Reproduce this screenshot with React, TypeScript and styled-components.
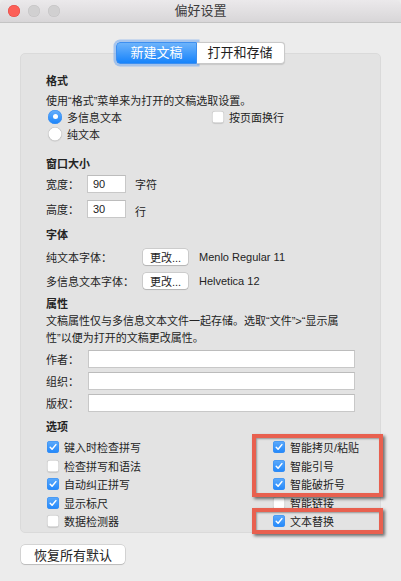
import React from 'react';
import styled, { createGlobalStyle } from 'styled-components';

const GlobalStyle = createGlobalStyle`
  html, body { margin: 0; padding: 0; background: #ececec; }
  body {
    font-family: "Liberation Sans", "Noto Sans CJK SC", sans-serif;
    color: #242424;
    -webkit-font-smoothing: antialiased;
  }
  * { box-sizing: border-box; }
`;

const Window = styled.div`
  width: 401px;
  height: 581px;
  background: #ececec;
  display: flex;
  flex-direction: column;
  border-radius: 5px;
  overflow: hidden;
`;

const TitleBar = styled.div`
  height: 23px;
  flex: none;
  display: grid;
  grid-template-columns: 1fr auto 1fr;
  align-items: center;
  background: linear-gradient(#ebe9eb, #d8d6d8);
  border-bottom: 1px solid #c4c4c4;
`;

const Lights = styled.div`
  display: flex;
  gap: 8px;
  padding-left: 8px;
`;

const Light = styled.span<{ $red?: boolean }>`
  width: 12px;
  height: 12px;
  border-radius: 50%;
  background: ${(p) => (p.$red ? '#fc5f57' : '#d1d0d1')};
  box-shadow: inset 0 0 0 0.5px ${(p) => (p.$red ? '#df4744' : '#c2c1c2')};
`;

const Title = styled.div`
  font-size: 13px;
  line-height: 16px;
  color: #3c3c3c;
`;

const Body = styled.div`
  display: flex;
  flex-direction: column;
  padding: 0 20px;
`;

const TabsRow = styled.div`
  display: flex;
  justify-content: center;
  margin-top: 19px;
  margin-bottom: -11px;
  position: relative;
  z-index: 1;
`;

const Tab = styled.div<{ $active?: boolean }>`
  height: 22px;
  font-size: 13px;
  line-height: 20px;
  display: flex;
  align-items: center;
  ${(p) =>
    p.$active
      ? `
    padding: 0 13px;
    color: #fff;
    background: linear-gradient(#6db3fb, #1683fb);
    border: 1px solid #3d8ff0;
    border-radius: 4px 0 0 4px;
    box-shadow: 0 0 0 2.5px rgba(110, 165, 240, 0.55);
  `
      : `
    padding: 0 11px;
    color: #1e1e1e;
    background: #fff;
    border: 1px solid #c9c9c9;
    border-left: none;
    border-radius: 0 4px 4px 0;
    box-shadow: 0 0.5px 1px rgba(0,0,0,0.12);
  `}
`;

const Panel = styled.div`
  background: #e3e3e3;
  border: 1px solid #dadada;
  border-radius: 5px;
  padding: 19px 25px 1.5px 25px;
  display: flex;
  flex-direction: column;
`;

const Heading = styled.div<{ $mt?: number }>`
  font-size: 11px;
  font-weight: bold;
  line-height: 16px;
  margin-top: ${(p) => p.$mt ?? 0}px;
`;

const Desc = styled.div<{ $mt?: number; $lh?: number }>`
  font-size: 11px;
  line-height: ${(p) => p.$lh ?? 14}px;
  margin-top: ${(p) => p.$mt ?? 0}px;
  padding-right: 8px;
`;

const FormatRow = styled.div`
  display: flex;
`;

const RadioCol = styled.div`
  width: 165px;
  display: flex;
  flex-direction: column;
`;

const OptRow = styled.div<{ $h?: number }>`
  height: ${(p) => p.$h ?? 17}px;
  display: flex;
  align-items: center;
  gap: 5px;
  font-size: 11px;
  white-space: nowrap;
`;

const RadioDot = styled.span<{ $on?: boolean }>`
  width: 14px;
  height: 14px;
  margin-left: 2px;
  border-radius: 50%;
  flex: none;
  display: flex;
  align-items: center;
  justify-content: center;
  background: ${(p) => (p.$on ? 'linear-gradient(#68b0fb, #1a84fb)' : '#fff')};
  box-shadow: ${(p) =>
    p.$on ? 'inset 0 0 0 0.5px #3a8ef0' : 'inset 0 0 0 0.5px #b9b9b9, 0 0.5px 1px rgba(0,0,0,0.15)'};
  &::after {
    content: '';
    width: 5px;
    height: 5px;
    border-radius: 50%;
    background: #fff;
    display: ${(p) => (p.$on ? 'block' : 'none')};
  }
`;

const Box = styled.span<{ $on?: boolean }>`
  width: 12px;
  height: 12px;
  margin-left: 1px;
  border-radius: 3px;
  flex: none;
  display: flex;
  align-items: center;
  justify-content: center;
  background: ${(p) => (p.$on ? 'linear-gradient(#5eabfb, #2187fb)' : '#fff')};
  box-shadow: ${(p) =>
    p.$on ? 'inset 0 0 0 0.5px #3a8ef0' : 'inset 0 0 0 0.5px #bdbdbd, 0 0.5px 1px rgba(0,0,0,0.12)'};
`;

const Check = ({ on }: { on?: boolean }) => (
  <Box $on={on}>
    {on && (
      <svg width="10" height="10" viewBox="0 0 10 10">
        <path d="M2.2 5.3 L4.1 7.3 L7.9 2.6" fill="none" stroke="#fff" strokeWidth="1.5" strokeLinecap="round" strokeLinejoin="round" />
      </svg>
    )}
  </Box>
);

const FieldRow = styled.div<{ $mt?: number }>`
  display: flex;
  align-items: center;
  height: 18px;
  margin-top: ${(p) => p.$mt ?? 0}px;
  font-size: 11px;
`;

const Label = styled.span<{ $w: number }>`
  width: ${(p) => p.$w}px;
  flex: none;
  white-space: nowrap;
`;

const TextField = styled.input<{ $w?: number }>`
  height: 18px;
  width: ${(p) => (p.$w ? `${p.$w}px` : 'auto')};
  flex: ${(p) => (p.$w ? 'none' : '1')};
  min-width: 0;
  background: #fff;
  border: 1px solid #c8c8c8;
  border-top-color: #bcbcbc;
  border-radius: 0;
  padding: 0 5px;
  font: 11px "Liberation Sans", sans-serif;
  color: #222;
  outline: none;
`;

const Unit = styled.span`
  margin-left: 9px;
  position: relative;
`;

const SmallButton = styled.div`
  width: 45px;
  height: 16px;
  flex: none;
  display: flex;
  align-items: center;
  justify-content: center;
  background: #fff;
  border-radius: 3px;
  box-shadow: 0 0 0 0.5px rgba(0,0,0,0.2), 0 1px 1px rgba(0,0,0,0.12);
  font-size: 11px;
`;

const FontName = styled.span`
  margin-left: 11px;
  font-family: "Liberation Sans", sans-serif;
`;

const Options = styled.div`
  display: flex;
  margin-top: 3px;
`;

const OptCol = styled.div<{ $w?: number }>`
  display: flex;
  flex-direction: column;
  width: ${(p) => (p.$w ? `${p.$w}px` : 'auto')};
  flex: ${(p) => (p.$w ? 'none' : '1')};
`;

const Highlight = styled.div`
  position: relative;
  display: flex;
  flex-direction: column;
  &::after {
    content: '';
    position: absolute;
    top: -4px;
    bottom: -3px;
    left: -20px;
    right: -24px;
    border: 4px solid #e8604f;
    box-shadow: 2px 2px 3px rgba(0, 0, 0, 0.55), inset 1px 1px 2px rgba(0, 0, 0, 0.35);
    pointer-events: none;
  }
`;

const ResetButton = styled.div`
  margin: 12px 0 0 1px;
  width: 104px;
  height: 19px;
  display: flex;
  align-items: center;
  justify-content: center;
  background: #fff;
  border-radius: 4px;
  box-shadow: 0 0 0 0.5px rgba(0,0,0,0.2), 0 1px 1px rgba(0,0,0,0.12);
  font-size: 13px;
`;

const Opt = ({ on, children }: { on?: boolean; children: React.ReactNode }) => (
  <OptRow $h={18.5}>
    <Check on={on} />
    <span>{children}</span>
  </OptRow>
);

export default function App() {
  return (
    <>
      <GlobalStyle />
      <Window>
        <TitleBar>
          <Lights>
            <Light $red />
            <Light />
            <Light />
          </Lights>
          <Title>偏好设置</Title>
          <div />
        </TitleBar>
        <Body>
          <TabsRow>
            <Tab $active>新建文稿</Tab>
            <Tab>打开和存储</Tab>
          </TabsRow>
          <Panel>
            <Heading>格式</Heading>
            <Desc $mt={5}>使用“格式”菜单来为打开的文稿选取设置。</Desc>
            <FormatRow>
              <RadioCol>
                <OptRow>
                  <RadioDot $on />
                  <span>多信息文本</span>
                </OptRow>
                <OptRow>
                  <RadioDot />
                  <span>纯文本</span>
                </OptRow>
              </RadioCol>
              <OptRow>
                <Check />
                <span>按页面换行</span>
              </OptRow>
            </FormatRow>

            <Heading $mt={14}>窗口大小</Heading>
            <FieldRow $mt={3}>
              <Label $w={41}>宽度：</Label>
              <TextField $w={39} readOnly defaultValue="90" />
              <Unit>字符</Unit>
            </FieldRow>
            <FieldRow $mt={7}>
              <Label $w={41}>高度：</Label>
              <TextField $w={39} readOnly defaultValue="30" />
              <Unit style={{ top: 2 }}>行</Unit>
            </FieldRow>

            <Heading $mt={9}>字体</Heading>
            <FieldRow $mt={5}>
              <Label $w={97}>纯文本字体：</Label>
              <SmallButton>更改...</SmallButton>
              <FontName>Menlo Regular 11</FontName>
            </FieldRow>
            <FieldRow $mt={6}>
              <Label $w={97}>多信息文本字体：</Label>
              <SmallButton>更改...</SmallButton>
              <FontName>Helvetica 12</FontName>
            </FieldRow>

            <Heading $mt={6}>属性</Heading>
            <Desc $mt={1} $lh={17}>
              文稿属性仅与多信息文本文件一起存储。选取“文件”&gt;“显示属性”以便为打开的文稿更改属性。
            </Desc>
            <FieldRow $mt={3}>
              <Label $w={42}>作者：</Label>
              <TextField readOnly defaultValue="" />
            </FieldRow>
            <FieldRow $mt={4}>
              <Label $w={42}>组织：</Label>
              <TextField readOnly defaultValue="" />
            </FieldRow>
            <FieldRow $mt={4}>
              <Label $w={42}>版权：</Label>
              <TextField readOnly defaultValue="" />
            </FieldRow>

            <Heading $mt={7}>选项</Heading>
            <Options>
              <OptCol $w={226}>
                <Opt on>键入时检查拼写</Opt>
                <Opt>检查拼写和语法</Opt>
                <Opt on>自动纠正拼写</Opt>
                <Opt on>显示标尺</Opt>
                <Opt>数据检测器</Opt>
              </OptCol>
              <OptCol>
                <Highlight>
                  <Opt on>智能拷贝/粘贴</Opt>
                  <Opt on>智能引号</Opt>
                  <Opt on>智能破折号</Opt>
                </Highlight>
                <Opt>智能链接</Opt>
                <Highlight>
                  <Opt on>文本替换</Opt>
                </Highlight>
              </OptCol>
            </Options>
          </Panel>
          <ResetButton>恢复所有默认</ResetButton>
        </Body>
      </Window>
    </>
  );
}
